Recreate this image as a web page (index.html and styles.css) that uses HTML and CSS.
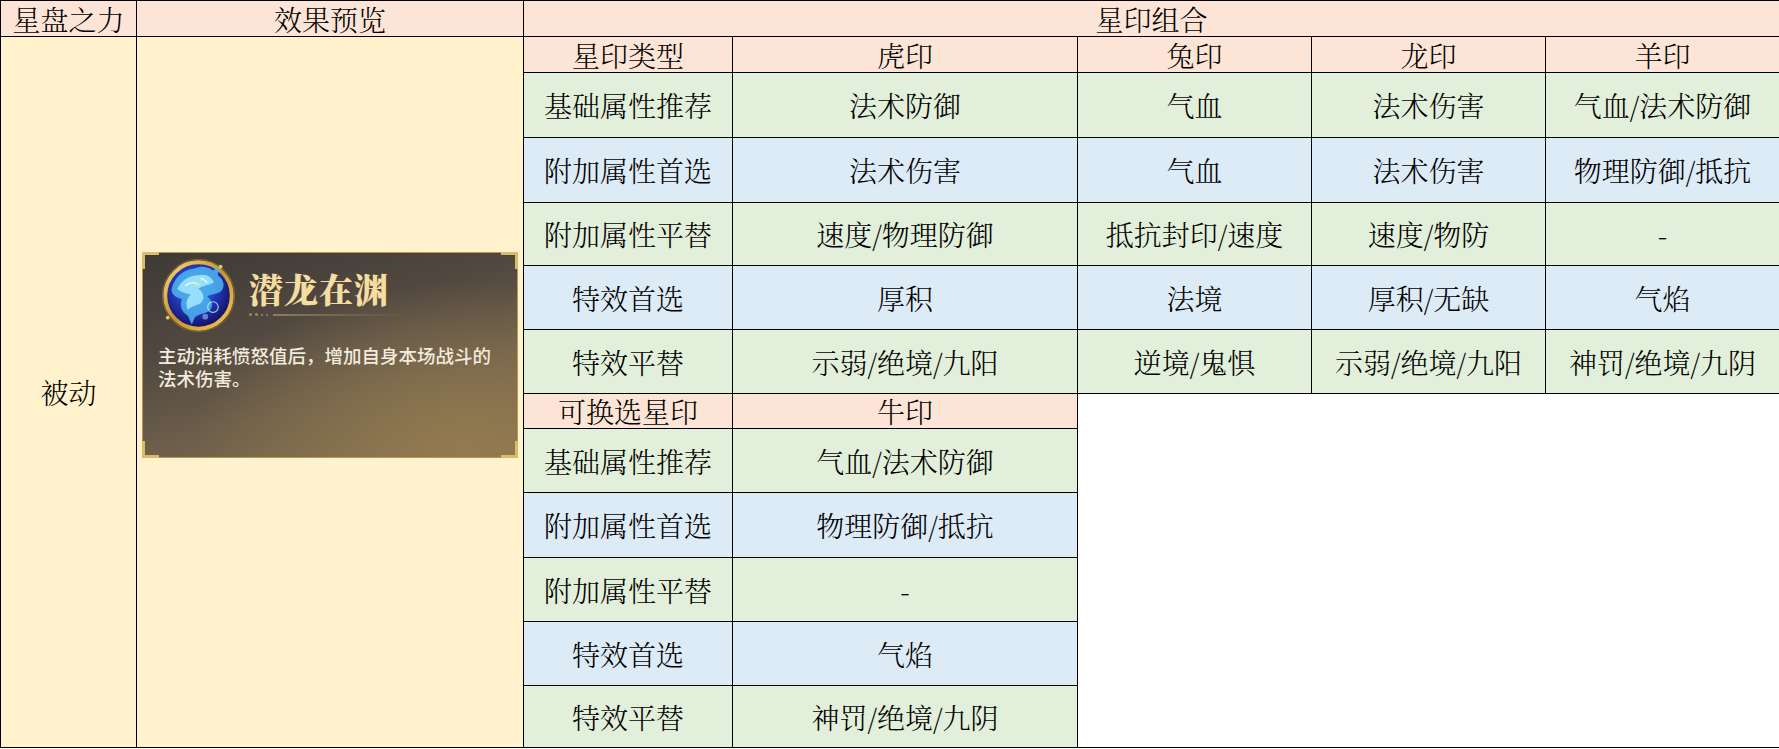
FILE: index.html
```html
<!DOCTYPE html>
<html lang="zh">
<head>
<meta charset="utf-8">
<title>星盘之力</title>
<link rel="stylesheet" href="styles.css">
</head>
<body>
<table class="grid">
  <colgroup>
    <col class="c1"><col class="c2"><col class="c3"><col class="c4"><col class="c5"><col class="c6"><col class="c7">
  </colgroup>
  <tr class="h36">
    <td class="hd">星盘之力</td>
    <td class="hd">效果预览</td>
    <td class="hd" colspan="5">星印组合</td>
  </tr>
  <tr class="h36">
    <td class="yl" rowspan="12">被动</td>
    <td class="yl preview" rowspan="12">
      <div class="card">
        <span class="corner tl"></span><span class="corner tr"></span><span class="corner bl"></span><span class="corner br"></span>
        <div class="card-head">
          <svg class="icon" viewBox="0 0 80 80" width="77" height="77">
            <defs>
              <radialGradient id="bg" cx="45%" cy="40%" r="60%">
                <stop offset="0" stop-color="#3f8df0"/>
                <stop offset="0.55" stop-color="#2238b8"/>
                <stop offset="1" stop-color="#130e5e"/>
              </radialGradient>
              <linearGradient id="ring" x1="0" y1="0" x2="1" y2="1">
                <stop offset="0" stop-color="#f7d77a"/>
                <stop offset="0.5" stop-color="#c8922e"/>
                <stop offset="1" stop-color="#f2c95c"/>
              </linearGradient>
            </defs>
            <circle cx="40" cy="40" r="37.5" fill="none" stroke="#8a6a2a" stroke-width="1"/>
            <circle cx="40" cy="40" r="34.5" fill="url(#bg)" stroke="url(#ring)" stroke-width="4"/>
            <path d="M12 34 C14 22 24 13 36 12 C42 9 50 10 55 14 L62 9 L60 19 C66 23 68 30 64 35 C60 39 53 38 49 41 C54 45 56 50 52 55 C47 60 40 58 36 63 L33 70 L29 61 C22 57 20 50 23 44 C17 42 12 39 12 34 Z" fill="#4fb4ee" opacity="0.85"/>
            <path d="M18 33 C22 25 30 19 40 19 C47 17 53 20 56 26 C51 30 45 29 40 33 C45 37 47 42 43 47 C39 51 33 50 29 55 C26 48 28 43 32 39 C26 38 21 36 18 33 Z" fill="#9fe6ff" opacity="0.9"/>
            <path d="M26 30 C30 27 34 26 38 27 M42 22 C45 23 48 25 49 27" stroke="#e9f8ff" stroke-width="1.5" fill="none"/>
            <path d="M36 27 L41 29" stroke="#f4ee8a" stroke-width="2" fill="none"/>
            <circle cx="55" cy="52" r="5.5" fill="none" stroke="#bfe8ff" stroke-width="1.2" opacity="0.85"/>
            <circle cx="47" cy="62" r="3" fill="#9fc0e8" opacity="0.6"/>
            <circle cx="63" cy="10" r="2" fill="#e8c35a"/>
            <circle cx="8" cy="63" r="2" fill="#e8c35a"/>
          </svg>
          <div class="title-block">
            <div class="title">潜龙在渊</div>
            <div class="divider"><span class="dots"></span><span class="dots"></span><span class="dots sm"></span><span class="dots sm"></span><span class="line"></span></div>
          </div>
        </div>
        <p class="desc">主动消耗愤怒值后，增加自身本场战斗的<br>法术伤害。</p>
      </div>
    </td>
    <td class="hd">星印类型</td>
    <td class="hd">虎印</td>
    <td class="hd">兔印</td>
    <td class="hd">龙印</td>
    <td class="hd">羊印</td>
  </tr>
  <tr class="r65 gr">
    <td>基础属性推荐</td><td>法术防御</td><td>气血</td><td>法术伤害</td><td>气血/法术防御</td>
  </tr>
  <tr class="r65 bl">
    <td>附加属性首选</td><td>法术伤害</td><td>气血</td><td>法术伤害</td><td>物理防御/抵抗</td>
  </tr>
  <tr class="r63 gr">
    <td>附加属性平替</td><td>速度/物理防御</td><td>抵抗封印/速度</td><td>速度/物防</td><td>-</td>
  </tr>
  <tr class="r64 bl">
    <td>特效首选</td><td>厚积</td><td>法境</td><td>厚积/无缺</td><td>气焰</td>
  </tr>
  <tr class="r64 gr">
    <td>特效平替</td><td>示弱/绝境/九阳</td><td>逆境/鬼惧</td><td>示弱/绝境/九阳</td><td>神罚/绝境/九阴</td>
  </tr>
  <tr class="h35">
    <td class="hd">可换选星印</td><td class="hd">牛印</td>
    <td class="blank" colspan="3" rowspan="6"></td>
  </tr>
  <tr class="r64 gr">
    <td>基础属性推荐</td><td>气血/法术防御</td>
  </tr>
  <tr class="r65 bl">
    <td>附加属性首选</td><td>物理防御/抵抗</td>
  </tr>
  <tr class="r64 gr">
    <td>附加属性平替</td><td>-</td>
  </tr>
  <tr class="r64 bl">
    <td>特效首选</td><td>气焰</td>
  </tr>
  <tr class="r62 gr">
    <td>特效平替</td><td>神罚/绝境/九阴</td>
  </tr>
</table>
</body>
</html>
```

FILE: styles.css
```css
html, body {
  margin: 0;
  padding: 0;
  background: #ffffff;
}

.grid {
  border-collapse: collapse;
  table-layout: fixed;
  width: 1779px;
  font-family: "Noto Serif CJK SC", "Liberation Serif", "Noto Sans CJK SC", serif;
  font-weight: 300;
  font-size: 28px;
  color: #000;
}

.c1 { width: 136px; }
.c2 { width: 387px; }
.c3 { width: 209px; }
.c4 { width: 345px; }
.c5 { width: 234px; }
.c6 { width: 234px; }
.c7 { width: 234px; }

.grid td {
  border: 1px solid #000;
  padding: 0;
  text-align: center;
  vertical-align: middle;
  line-height: 1;
  white-space: nowrap;
}

.h36 { height: 36px; }
.h35 { height: 35px; }
.r62 { height: 62px; }
.r63 { height: 63px; }
.r64 { height: 64px; }
.r65 { height: 65px; }

.hd { background: #fce4d6; }
.yl { background: #fff2cc; }
.gr td { background: #e2efda; }
.bl td { background: #ddebf7; }
.grid td.blank { background: #ffffff; }

.grid td.preview {
  vertical-align: top;
  padding: 215px 0 0 5px;
  text-align: left;
}

/* skill card */
.card {
  position: relative;
  box-sizing: border-box;
  width: 376px;
  height: 206px;
  padding: 4px 0 0 15px;
  background:
    radial-gradient(ellipse at 85% 95%, rgba(150,125,80,0.85) 0%, rgba(150,125,80,0) 60%),
    linear-gradient(165deg, #3d3a37 0%, #514840 35%, #6c5e4a 65%, #84704f 100%);
  border: 1px solid #b8974f;
  border-radius: 3px;
  font-family: "Noto Sans CJK SC", "Noto Sans", sans-serif;
  font-weight: 400;
  white-space: normal;
}

.corner {
  position: absolute;
  width: 14px;
  height: 14px;
  border-color: #d9bb6c;
  border-style: solid;
  border-width: 0;
}
.corner.tl { top: -1px; left: -1px; border-top-width: 3px; border-left-width: 3px; border-top-left-radius: 2px; }
.corner.tr { top: -1px; right: -1px; border-top-width: 3px; border-right-width: 3px; }
.corner.bl { bottom: -1px; left: -1px; border-bottom-width: 3px; border-left-width: 3px; }
.corner.br { bottom: -1px; right: -1px; border-bottom-width: 3px; border-right-width: 3px; }

.card-head {
  display: flex;
  align-items: flex-start;
}

.icon {
  display: block;
  margin-left: 2px;
  flex: none;
}

.title-block {
  margin-left: 12px;
  margin-top: 12px;
}

.title {
  font-family: "Noto Serif CJK SC", "Noto Sans CJK SC", serif;
  font-weight: 900;
  font-size: 34px;
  line-height: 40px;
  color: #f5dc9f;
  letter-spacing: 1px;
}

.divider {
  display: flex;
  align-items: center;
  margin-top: 4px;
  gap: 3px;
}
.divider .dots {
  display: block;
  width: 3px;
  height: 3px;
  border-radius: 50%;
  background: #9c8a66;
}
.divider .dots.sm {
  width: 2px;
  height: 2px;
}
.divider .line {
  display: block;
  width: 135px;
  height: 2px;
  margin-left: 2px;
  background: linear-gradient(90deg, #8d7d5e, rgba(141,125,94,0));
}

.desc {
  margin: 10px 0 0 0;
  font-size: 18.5px;
  font-weight: 500;
  line-height: 23px;
  color: #f2ebde;
  white-space: nowrap;
}
```
